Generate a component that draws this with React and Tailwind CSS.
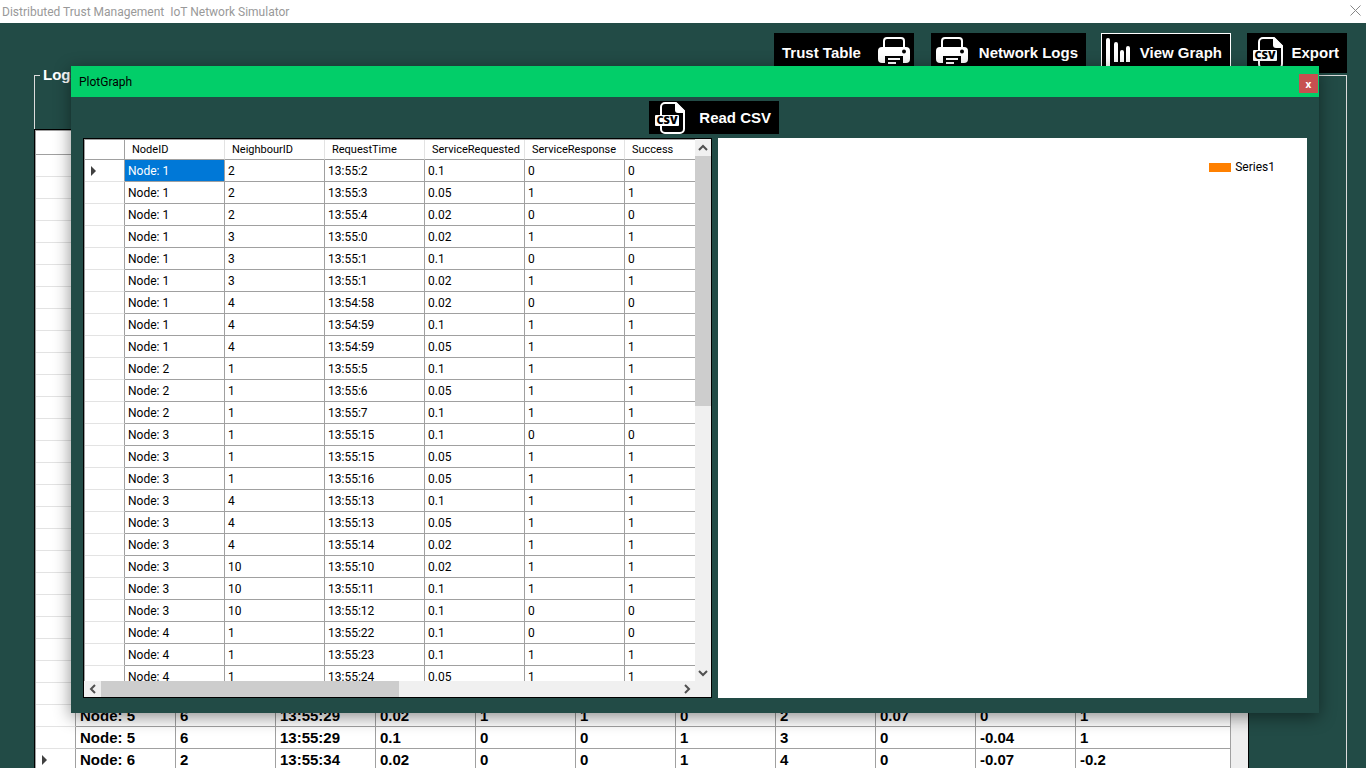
import React from "react";

const READ_ROWS = [
  ["Node: 1", "2", "13:55:2", "0.1", "0", "0"],
  ["Node: 1", "2", "13:55:3", "0.05", "1", "1"],
  ["Node: 1", "2", "13:55:4", "0.02", "0", "0"],
  ["Node: 1", "3", "13:55:0", "0.02", "1", "1"],
  ["Node: 1", "3", "13:55:1", "0.1", "0", "0"],
  ["Node: 1", "3", "13:55:1", "0.02", "1", "1"],
  ["Node: 1", "4", "13:54:58", "0.02", "0", "0"],
  ["Node: 1", "4", "13:54:59", "0.1", "1", "1"],
  ["Node: 1", "4", "13:54:59", "0.05", "1", "1"],
  ["Node: 2", "1", "13:55:5", "0.1", "1", "1"],
  ["Node: 2", "1", "13:55:6", "0.05", "1", "1"],
  ["Node: 2", "1", "13:55:7", "0.1", "1", "1"],
  ["Node: 3", "1", "13:55:15", "0.1", "0", "0"],
  ["Node: 3", "1", "13:55:15", "0.05", "1", "1"],
  ["Node: 3", "1", "13:55:16", "0.05", "1", "1"],
  ["Node: 3", "4", "13:55:13", "0.1", "1", "1"],
  ["Node: 3", "4", "13:55:13", "0.05", "1", "1"],
  ["Node: 3", "4", "13:55:14", "0.02", "1", "1"],
  ["Node: 3", "10", "13:55:10", "0.02", "1", "1"],
  ["Node: 3", "10", "13:55:11", "0.1", "1", "1"],
  ["Node: 3", "10", "13:55:12", "0.1", "0", "0"],
  ["Node: 4", "1", "13:55:22", "0.1", "0", "0"],
  ["Node: 4", "1", "13:55:23", "0.1", "1", "1"],
  ["Node: 4", "1", "13:55:24", "0.05", "1", "1"],
];

const LOG_TAIL = [
  ["Node: 5", "6", "13:55:29", "0.02", "1", "1", "0", "2", "0.07", "0", "1"],
  ["Node: 5", "6", "13:55:29", "0.1", "0", "0", "1", "3", "0", "-0.04", "1"],
  ["Node: 6", "2", "13:55:34", "0.02", "0", "0", "1", "4", "0", "-0.07", "-0.2"],
];

const COLUMNS = ["NodeID", "NeighbourID", "RequestTime", "ServiceRequested", "ServiceResponse", "Success"];
const EMPTY = Array(11).fill("");
const LOG_ROWS = [...Array(25).fill(EMPTY), ...LOG_TAIL];

function PrinterIcon() {
  return (
    <svg viewBox="0 0 32 32" className="h-8 w-8 shrink-0" aria-hidden="true">
      <path d="M6 11V4a3 3 0 0 1 3-3h14a3 3 0 0 1 3 3v7" fill="none" stroke="#fff" strokeWidth="2" />
      <path d="M4 10h24a4 4 0 0 1 4 4v8a4 4 0 0 1-4 4H4a4 4 0 0 1-4-4v-8a4 4 0 0 1 4-4z" fill="#fff" />
      <circle cx="26" cy="14.500" r="2" fill="#000" />
      <path d="M7 19h18v13H7z" fill="#000" />
      <path d="M9 21.500v10M23 21.500v10" stroke="#000" strokeWidth="2" />
      <path d="M10 22h12M10 26h8" stroke="#fff" strokeWidth="2" />
    </svg>
  );
}

function CsvIcon() {
  return (
    <svg viewBox="0 0 32 32" className="h-8 w-8 shrink-0" aria-hidden="true">
      <path d="M6 14V5a4 4 0 0 1 4-4h11l8 8v18a4 4 0 0 1-4 4H10a4 4 0 0 1-4-4v-3" fill="none" stroke="#fff" strokeWidth="2" />
      <path d="M20 1h2l8 8v2h-7a3 3 0 0 1-3-3z" fill="#fff" />
      <rect x="0" y="13" width="24" height="11" rx="1" fill="#fff" />
      <text x="12" y="22" textAnchor="middle" fontFamily="Open Sans" fontWeight="800" fontSize="11" fill="#000">CSV</text>
    </svg>
  );
}

function BarsIcon() {
  return (
    <svg viewBox="0 0 32 32" className="h-8 w-8 shrink-0" aria-hidden="true">
      <path d="M1 32V3a2 2 0 0 1 4 0v29z" fill="#fff" />
      <path d="M9 25V7a2 2 0 0 1 4 0v18zM15 25V15a2 2 0 0 1 4 0v10zM21 25V11a2 2 0 0 1 4 0v14z" fill="#fff" />
      <path d="M3 31h27" stroke="#fff" strokeWidth="2" />
    </svg>
  );
}

function ToolButton({ children, className }) {
  return (
    <button
      type="button"
      className={
        "flex items-center justify-between bg-black font-['Liberation_Sans',sans-serif] text-[15px] leading-5 font-bold whitespace-nowrap text-white " +
        className
      }
    >
      {children}
    </button>
  );
}

function Marker() {
  return (
    <svg viewBox="0 0 5 10" className="ml-[6px] h-[10px] w-[5px]" aria-hidden="true">
      <path d="M0 0l5 5-5 5z" fill="#404040" />
    </svg>
  );
}

function Arrow({ d, label, className }) {
  return (
    <button type="button" aria-label={label} className={"flex shrink-0 items-center justify-center " + className}>
      <svg viewBox="0 0 10 10" className="h-[10px] w-[10px]" aria-hidden="true">
        <path d={d} fill="none" stroke="#505050" strokeWidth="2" />
      </svg>
    </button>
  );
}

function LogTable() {
  return (
    <div className="mr-[97px] -ml-px flex flex-1 overflow-hidden border border-b-0 border-black bg-[#efefef]">
      <div className="min-w-0 flex-1 overflow-hidden border-t border-l border-[#a0a0a0]">
        <table className="w-full table-fixed border-separate border-spacing-0 bg-white font-['Liberation_Sans',sans-serif] text-[15px] leading-5 font-bold text-black">
          <colgroup>
            <col className="w-10" />
            {EMPTY.slice(1).map((_, i) => (
              <col key={i} className="w-[100px]" />
            ))}
            <col />
          </colgroup>
          <thead>
            <tr className="h-6">
              <td className="border-r border-b border-[#a0a0a0] p-0" />
              {EMPTY.map((_, i) => (
                <td key={i} className="border-r border-b border-[#a0a0a0] p-0" />
              ))}
            </tr>
          </thead>
          <tbody>
            {LOG_ROWS.map((row, r) => (
              <tr key={r} className="h-[22px]">
                <td className="border-r border-b border-r-[#a0a0a0] border-b-[#e3e3e3] p-0">
                  {r === LOG_ROWS.length - 1 && <Marker />}
                </td>
                {row.map((cell, c) => (
                  <td key={c} className="border-r border-b border-[#a0a0a0] p-0 pl-1">
                    {cell}
                  </td>
                ))}
              </tr>
            ))}
          </tbody>
        </table>
      </div>
      <div className="w-[17px] shrink-0" />
    </div>
  );
}

function ReadGrid() {
  return (
    <div className="flex w-[629px] shrink-0 flex-col border border-black bg-white">
      <div className="flex min-h-0 flex-1">
        <div className="min-w-0 flex-1 overflow-hidden border-t border-l border-[#a0a0a0]">
          <table className="w-[640px] table-fixed border-separate border-spacing-0 font-[Roboto,sans-serif] text-[12px] leading-4 text-black">
            <colgroup>
              <col className="w-10" />
              {COLUMNS.map((c) => (
                <col key={c} className="w-[100px]" />
              ))}
            </colgroup>
            <thead>
              <tr className="h-5">
                <td className="border-r border-b border-[#a0a0a0] p-0" />
                {COLUMNS.map((c) => (
                  <th key={c} scope="col" className="border-r border-b border-r-[#e3e3e3] border-b-[#a0a0a0] p-0 pl-[7px] text-left text-[11px] font-normal">
                    {c}
                  </th>
                ))}
              </tr>
            </thead>
            <tbody>
              {READ_ROWS.map((row, r) => (
                <tr key={r} className="h-[22px]">
                  <td className="border-r border-b border-r-[#a0a0a0] border-b-[#e3e3e3] p-0">{r === 0 && <Marker />}</td>
                  {row.map((cell, c) => (
                    <td
                      key={c}
                      className={
                        "border-r border-b border-[#a0a0a0] p-0 pl-[3px] " +
                        (r === 0 && c === 0 ? "bg-[#0078d7] text-white" : "")
                      }
                    >
                      {cell}
                    </td>
                  ))}
                </tr>
              ))}
            </tbody>
          </table>
        </div>
        <div className="flex w-4 shrink-0 flex-col bg-[#f0f0f0]">
          <Arrow label="Scroll up" className="h-[17px] w-4" d="M1 7l4-4 4 4" />
          <div className="h-[250px] bg-[#cdcdcd]" />
          <div className="flex-1" />
          <Arrow label="Scroll down" className="h-[17px] w-4" d="M1 3l4 4 4-4" />
        </div>
      </div>
      <div className="flex h-4 shrink-0 bg-[#f0f0f0] pr-4">
        <Arrow label="Scroll left" className="h-4 w-[17px]" d="M7 1L3 5l4 4" />
        <div className="w-[298px] bg-[#cdcdcd]" />
        <div className="flex-1" />
        <Arrow label="Scroll right" className="h-4 w-[17px]" d="M3 1l4 4-4 4" />
      </div>
    </div>
  );
}

function PlotDialog() {
  return (
    <div className="absolute inset-0 flex pt-[66px] pr-[47px] pb-[55px] pl-[71px]">
      <section
        role="dialog"
        aria-label="PlotGraph"
        className="flex min-w-0 flex-1 flex-col bg-[#224b46] shadow-[0_4px_16px_rgba(0,0,0,0.45)]"
      >
        <header className="flex h-[31px] shrink-0 items-center justify-between bg-[#02ce69] pr-px pl-2">
          <h2 className="font-[Roboto,sans-serif] text-[12px] leading-4 text-black">PlotGraph</h2>
          <button
            type="button"
            aria-label="Close"
            className="mt-1 flex h-[19px] w-[19px] items-center justify-center bg-[#c75050] font-['Open_Sans',sans-serif] text-[10px] leading-none font-bold text-white"
          >
            x
          </button>
        </header>
        <div className="flex justify-center py-1 pl-[38px]">
          <ToolButton className="h-[33px] w-[130px] pr-2 pl-[6px]">
            <CsvIcon />
            Read CSV
          </ToolButton>
        </div>
        <div className="flex min-h-0 flex-1 gap-[6px] px-3 pb-[15px]">
          <ReadGrid />
          <div className="flex min-w-0 flex-1 items-start justify-end bg-white pt-[21px] pr-8">
            <div className="flex items-center gap-1 font-[Roboto,sans-serif] text-[12px] leading-4 text-black">
              <span className="h-[9px] w-[22px] bg-[#ff8000]" />
              Series1
            </div>
          </div>
        </div>
      </section>
    </div>
  );
}

export default function App() {
  return (
    <div className="relative flex h-screen flex-col overflow-hidden bg-[#224b46]">
      <header className="flex h-[23px] shrink-0 items-center justify-between bg-white pr-[5px] pl-[2px]">
        <h1 className="font-[Roboto,sans-serif] text-[12px] leading-4 whitespace-pre text-[#999999]">
          {"Distributed Trust Management  IoT Network Simulator"}
        </h1>
        <button type="button" aria-label="Close window">
          <svg viewBox="0 0 11 11" className="mb-[3px] h-[11px] w-[11px]" aria-hidden="true">
            <path d="M.5.5l10 10M10.500.5l-10 10" stroke="#888" strokeWidth="1" />
          </svg>
        </button>
      </header>
      <nav className="flex shrink-0 justify-end pt-[10px] pr-[19px]">
        <ToolButton className="mr-[17px] h-10 w-[140px] pr-1 pl-2">
          Trust Table
          <PrinterIcon />
        </ToolButton>
        <ToolButton className="mr-[15px] h-10 w-[155px] pr-2 pl-[5px]">
          <PrinterIcon />
          Network Logs
        </ToolButton>
        <ToolButton className="mr-4 h-10 w-[130px] border border-white pr-2 pl-[3px]">
          <BarsIcon />
          View Graph
        </ToolButton>
        <ToolButton className="h-10 w-[100px] pr-2 pl-[6px]">
          <CsvIcon />
          Export
        </ToolButton>
      </nav>
      <fieldset className="-mt-[8px] mr-[19px] ml-[34px] flex min-h-0 flex-1 flex-col border border-b-0 border-[#dcdcdc] pt-[44px]">
        <legend className="ml-[5px] px-[3px] font-['Liberation_Sans',sans-serif] text-[15px] leading-5 font-bold text-white">
          Logs
        </legend>
        <LogTable />
      </fieldset>
      <PlotDialog />
    </div>
  );
}
